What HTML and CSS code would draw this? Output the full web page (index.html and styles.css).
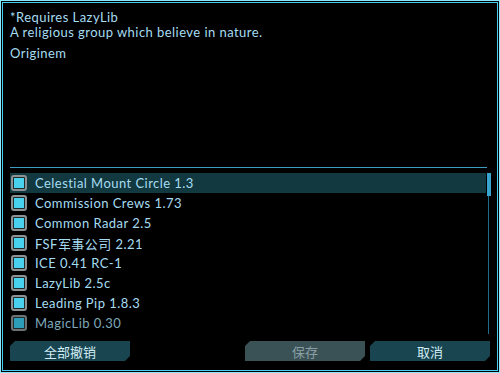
FILE: index.html
```
<!DOCTYPE html>
<html lang="zh">
<head>
    <meta charset="UTF-8">
    <title>Mod Manager</title>
    <link rel="stylesheet" href="styles.css">
</head>
<body>

<div class="frame">
    <div class="panel">
        <div class="desc">
            <p>*Requires LazyLib<br>A religious group which believe in nature.</p>
            <p>Originem</p>
        </div>

        <div class="divider"></div>

        <div class="list-wrap">
            <ul class="mod-list">
                <li class="mod selected"><span class="check"></span>Celestial Mount Circle 1.3</li>
                <li class="mod"><span class="check"></span>Commission Crews 1.73</li>
                <li class="mod"><span class="check"></span>Common Radar 2.5</li>
                <li class="mod"><span class="check"></span>FSF军事公司 2.21</li>
                <li class="mod"><span class="check"></span>ICE 0.41 RC-1</li>
                <li class="mod"><span class="check"></span>LazyLib 2.5c</li>
                <li class="mod"><span class="check"></span>Leading Pip 1.8.3</li>
                <li class="mod faded"><span class="check"></span>MagicLib 0.30</li>
            </ul>
            <div class="scrollbar"><div class="thumb"></div></div>
        </div>

        <div class="actions">
            <button class="btn">全部撤销</button>
            <div class="spacer"></div>
            <button class="btn disabled">保存</button>
            <button class="btn">取消</button>
        </div>
    </div>
</div>

</body>
</html>
```

FILE: styles.css
```
html, body {
    margin: 0;
    padding: 0;
    background: #000;
}
body {
    font-family: Lato, "Noto Sans CJK SC", sans-serif;
    font-size: 13px;
    letter-spacing: 0.45px;
    color: #a6dcf2;
}
.frame {
    width: 500px;
    height: 373px;
    box-sizing: border-box;
    border: 1px solid #8ae6fb;
    padding: 1px;
}
.panel {
    height: 100%;
    box-sizing: border-box;
    border: 1px solid #48cdf0;
    padding: 7px 6px 0 6px;
    display: flex;
    flex-direction: column;
}
.desc {
    height: 157px;
    padding-left: 1px;
}
.desc p {
    margin: 0 0 6px 0;
    line-height: 15px;
}
.divider {
    height: 1px;
    margin: 0 4px 0 1px;
    background: #3c9fc0;
}
.list-wrap {
    display: flex;
    margin-top: 5px;
    height: 161px;
}
.mod-list {
    list-style: none;
    margin: 0 0 0 1px;
    padding: 0;
    flex: 1;
}
.mod {
    height: 20px;
    display: flex;
    align-items: center;
    gap: 8px;
    padding-left: 1px;
    white-space: nowrap;
}
.mod.selected {
    background: #12393f;
}
.mod.faded {
    color: #7fa8b8;
}
.check {
    width: 16px;
    height: 16px;
    box-sizing: border-box;
    border: 2px solid #8c9294;
    border-radius: 3px;
    background: #1f2a2c;
    padding: 1px;
    display: inline-block;
}
.check::before {
    content: "";
    display: block;
    width: 100%;
    height: 100%;
    background-color: #27c2e4;
    background-image: radial-gradient(circle, #6fe4f8 0.6px, transparent 0.8px);
    background-size: 2px 2px;
}
.mod.faded .check {
    border-color: #6d7374;
}
.mod.faded .check::before {
    background-color: #1e8ea8;
    background-image: radial-gradient(circle, #3cb0c8 0.6px, transparent 0.8px);
}
.scrollbar {
    width: 4px;
    margin-left: 1px;
    background: linear-gradient(to right, transparent 1px, #1f6f8c 1px, #1f6f8c 2px, transparent 2px);
}
.thumb {
    width: 4px;
    height: 23px;
    background: #3aa4d0;
}
.actions {
    display: flex;
    gap: 5px;
    margin-top: 7px;
    padding-left: 1px;
    padding-right: 1px;
}
.spacer {
    flex: 1;
}
.btn {
    width: 120px;
    height: 20px;
    border: none;
    padding: 0;
    background: #184550;
    color: #d2ecf4;
    font-family: "Noto Sans CJK SC", sans-serif;
    font-size: 13px;
    clip-path: polygon(5px 0, 100% 0, 100% calc(100% - 5px), calc(100% - 5px) 100%, 0 100%, 0 5px);
}
.btn.disabled {
    background: #3a5155;
    color: #8aa0a6;
}
```
